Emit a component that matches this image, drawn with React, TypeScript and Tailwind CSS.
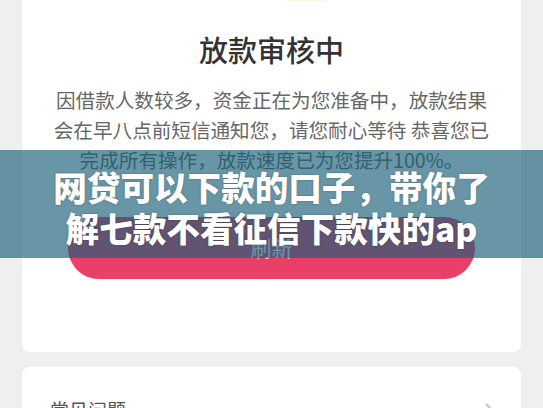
const bodyLines = [
  "因借款人数较多，资金正在为您准备中，放款结果",
  "会在早八点前短信通知您，请您耐心等待 恭喜您已",
  "完成所有操作，放款速度已为您提升100%。",
];

const App = () => {
  return (
    <div
      className="relative h-screen overflow-hidden bg-[#efefef] px-[22px]"
      style={{ fontFamily: '"Noto Sans CJK SC", "Noto Sans", sans-serif' }}
    >
      {/* status card */}
      <div className="-mt-[20px] rounded-[8px] bg-white pb-[73px]">
        <div className="flex h-[21px] items-end">
          <div className="ml-[262px] h-[2px] w-[42px] rounded-full bg-[#f8f5e6]"></div>
        </div>
        <h1 className="mt-[30px] text-center text-[29px] font-medium leading-[36px] text-[#333333]">
          放款审核中
        </h1>
        <div className="mt-[18px] text-center text-[19.6px] leading-[30px] text-[#666666]">
          {bodyLines.map((line, i) => (
            <p key={i} className="whitespace-pre">
              {line}
            </p>
          ))}
        </div>
        <button className="mx-[46px] mt-[42px] flex h-[62px] w-[407px] items-center justify-center rounded-full bg-[#ea4068] text-[21px] text-white">
          刷新
        </button>
      </div>

      {/* faq card */}
      <div className="mt-[15px] flex items-start justify-between rounded-[8px] bg-white pl-[28px] pr-[25px] pt-[30px] pb-[20px]">
        <span className="text-[19px] leading-[26px] text-[#555555]">常见问题</span>
        <svg width="12" height="20" viewBox="0 0 12 20" className="mt-[5px]">
          <polyline points="2,2 10,10 2,18" fill="none" stroke="#c4c4c4" strokeWidth="2" />
        </svg>
      </div>

      {/* title banner over the page */}
      <div className="absolute inset-x-0 top-[150px] h-[108px] bg-[rgba(23,94,118,0.65)] pt-[16px] text-center text-[33.6px] font-black leading-[41px] text-white [text-shadow:0_0_2px_rgba(0,0,0,0.35)]">
        <p>网贷可以下款的口子，带你了</p>
        <p>解七款不看征信下款快的ap</p>
      </div>
    </div>
  );
};

export default App;
